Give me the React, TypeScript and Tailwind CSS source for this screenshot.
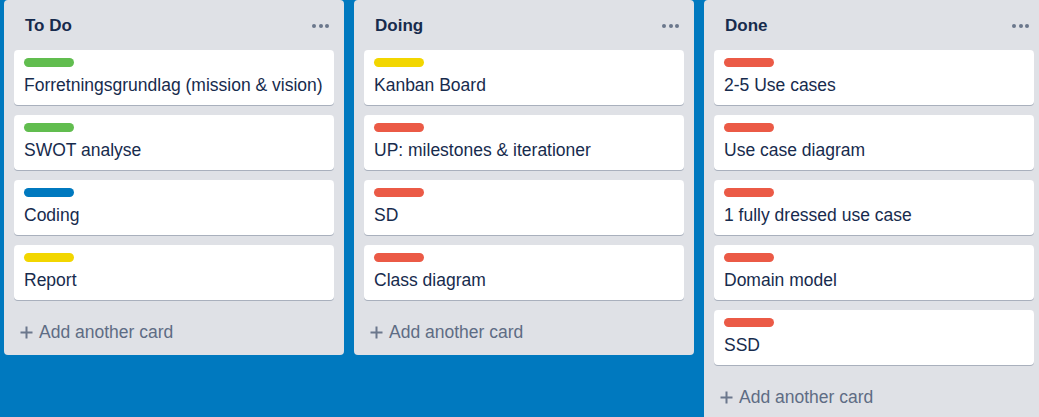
import React from 'react';

type Card = { title: string; label: string };
type List = { name: string; cards: Card[] };

const labelColors: Record<string, string> = {
  green: 'bg-[#61bd4f]',
  yellow: 'bg-[#f2d600]',
  red: 'bg-[#eb5a46]',
  blue: 'bg-[#0079bf]',
};

const lists: List[] = [
  {
    name: 'To Do',
    cards: [
      { title: 'Forretningsgrundlag (mission & vision)', label: 'green' },
      { title: 'SWOT analyse', label: 'green' },
      { title: 'Coding', label: 'blue' },
      { title: 'Report', label: 'yellow' },
    ],
  },
  {
    name: 'Doing',
    cards: [
      { title: 'Kanban Board', label: 'yellow' },
      { title: 'UP: milestones & iterationer', label: 'red' },
      { title: 'SD', label: 'red' },
      { title: 'Class diagram', label: 'red' },
    ],
  },
  {
    name: 'Done',
    cards: [
      { title: '2-5 Use cases', label: 'red' },
      { title: 'Use case diagram', label: 'red' },
      { title: '1 fully dressed use case', label: 'red' },
      { title: 'Domain model', label: 'red' },
      { title: 'SSD', label: 'red' },
    ],
  },
];

function KanbanList({ list }: { list: List }) {
  return (
    <div className="w-[340px] shrink-0 bg-[#dfe1e6] rounded-[4px] flex flex-col">
      {/* Header */}
      <div className="h-[50px] flex items-center justify-between pl-[21px] pr-[12px] pt-[1px]">
        <span className="text-[17px] font-bold text-[#172b4d]">{list.name}</span>
        <span className="flex items-center gap-[2.5px] pr-[3px]">
          <span className="w-[4px] h-[4px] rounded-full bg-[#6b778c]" />
          <span className="w-[4px] h-[4px] rounded-full bg-[#6b778c]" />
          <span className="w-[4px] h-[4px] rounded-full bg-[#6b778c]" />
        </span>
      </div>

      {/* Cards */}
      <div className="px-[10px] flex flex-col gap-[10px]">
        {list.cards.map((c, i) => (
          <div key={i} className="bg-white rounded-[4px] shadow-[0_1px_0_rgba(9,30,66,0.25)] px-[10px] pt-[8px] pb-[7px]">
            <div className={`w-[50px] h-[9px] rounded-[5px] ${labelColors[c.label]}`} />
            <div className="mt-[6px] text-[17.5px] leading-[25px] text-[#172b4d]">{c.title}</div>
          </div>
        ))}
      </div>

      {/* Add card */}
      <div className="h-[45px] mt-[10px] flex items-center pl-[16px] gap-[6px] text-[17.5px] text-[#5e6c84]">
        <svg width="13" height="13" viewBox="0 0 13 13" fill="none" stroke="#6b778c" strokeWidth="2">
          <path d="M6.5 0.5v12M0.5 6.5h12" />
        </svg>
        <span>Add another card</span>
      </div>
    </div>
  );
}

export default function App() {
  return (
    <div
      className="w-[1039px] h-[417px] bg-[#0079bf] overflow-hidden flex items-start gap-[10px] pl-[4px]"
      style={{ fontFamily: '"Liberation Sans", Arial, sans-serif' }}
    >
      {lists.map(l => (
        <KanbanList key={l.name} list={l} />
      ))}
    </div>
  );
}
